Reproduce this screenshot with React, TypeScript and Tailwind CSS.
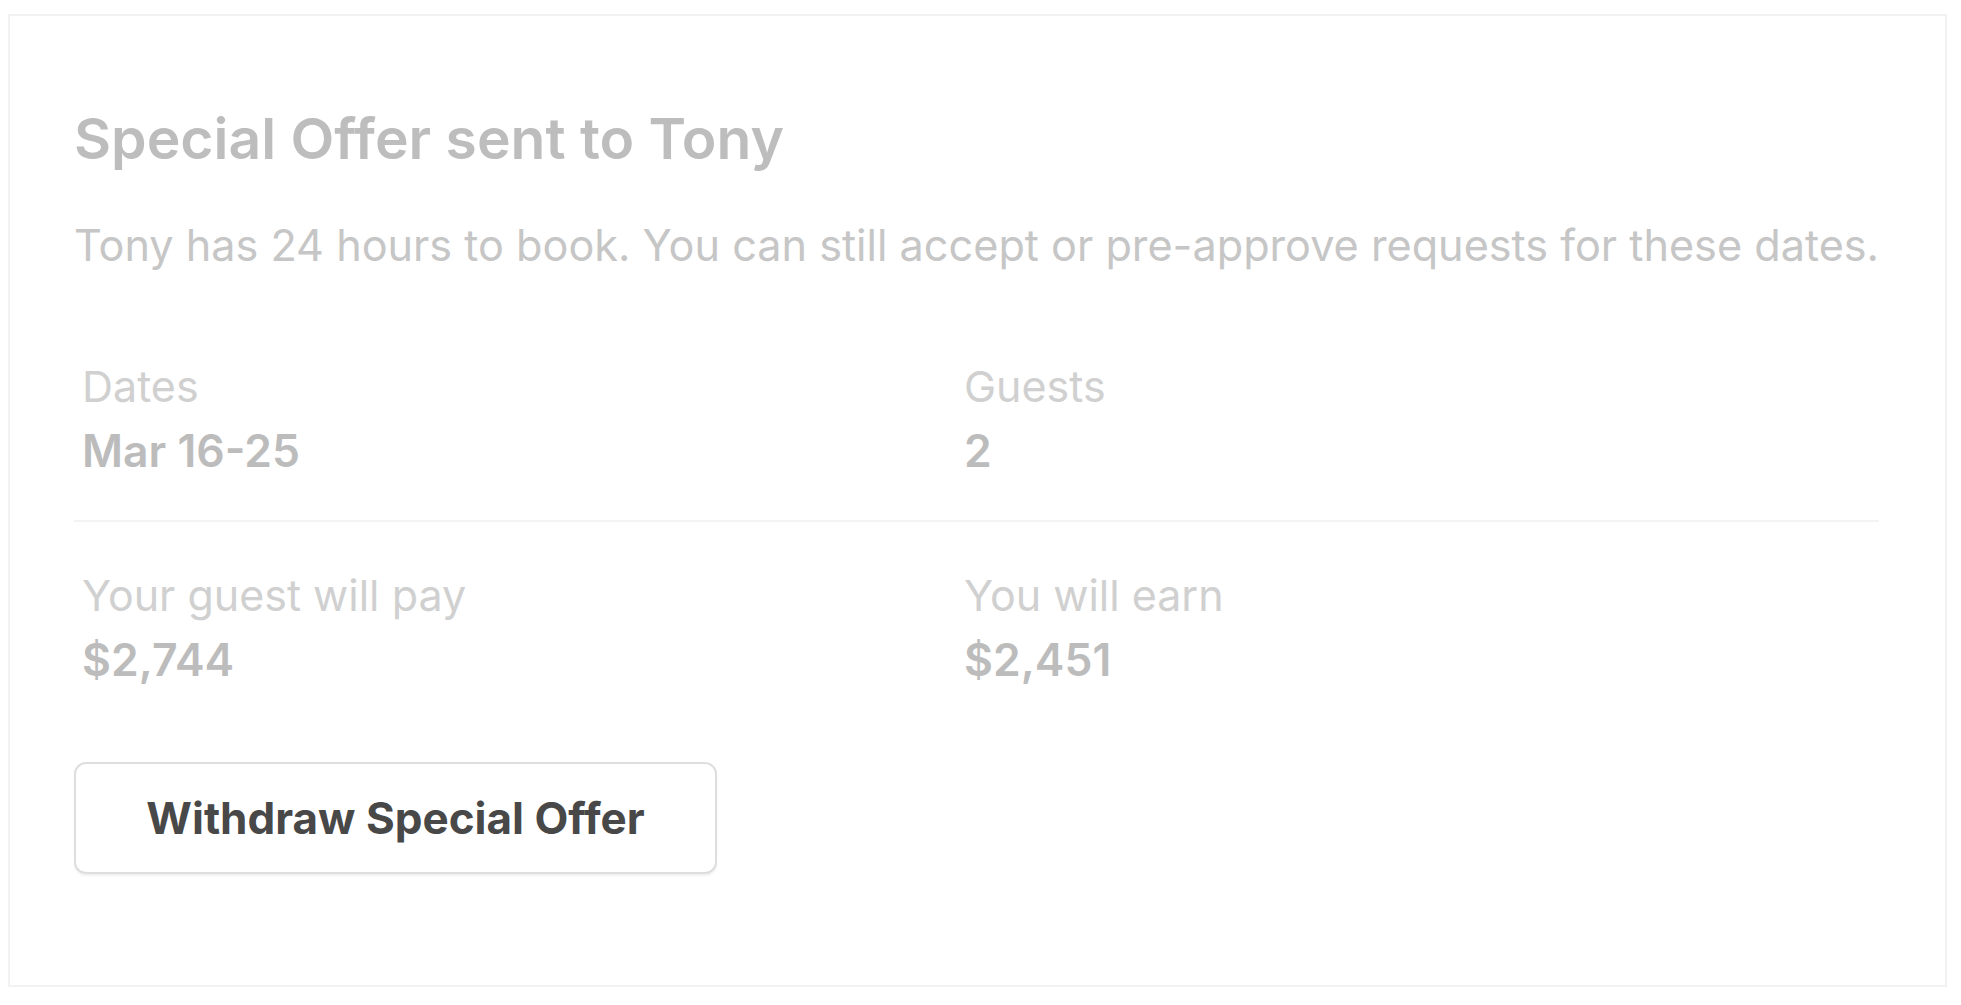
const font = { fontFamily: "Inter, 'Liberation Sans', sans-serif" };

function Field({ label, value }: { label: string; value: string }) {
  return (
    <div className="flex flex-col">
      <div className="text-[43px] leading-[50px] text-[#d0d0d0]">{label}</div>
      <div className="mt-[15px] text-[44.5px] leading-[50px] font-semibold text-[#bcbcbc]">
        {value}
      </div>
    </div>
  );
}

export default function App() {
  return (
    <div className="min-h-screen bg-white pt-[14px] pl-[8px]" style={font}>
      <div className="w-[1939px] h-[973px] border-2 border-[#f2f2f2] pt-[88px] pl-[64px] pr-[66px]">
        <h1 className="text-[57px] leading-[70px] font-semibold text-[#bdbdbd]">
          Special Offer sent to Tony
        </h1>
        <p className="mt-[41px] whitespace-nowrap text-[43.2px] leading-[60px] text-[#c6c6c6]">
          Tony has 24 hours to book. You can still accept or pre-approve requests for these dates.
        </p>

        <div className="mt-[86px] flex pl-[8px]">
          <div className="w-[882px]">
            <Field label="Dates" value="Mar 16-25" />
          </div>
          <Field label="Guests" value="2" />
        </div>

        <div className="mt-[44px] h-[2px] bg-[#f3f3f3]" />

        <div className="mt-[48px] flex pl-[8px]">
          <div className="w-[882px]">
            <Field label="Your guest will pay" value="$2,744" />
          </div>
          <Field label="You will earn" value="$2,451" />
        </div>

        <button className="mt-[77px] w-[643px] h-[112px] rounded-[12px] border-2 border-[#dedede] bg-white shadow-[0_2px_2px_rgba(0,0,0,0.06)] text-[44px] font-bold text-[#484848]">
          Withdraw Special Offer
        </button>
      </div>
    </div>
  );
}
